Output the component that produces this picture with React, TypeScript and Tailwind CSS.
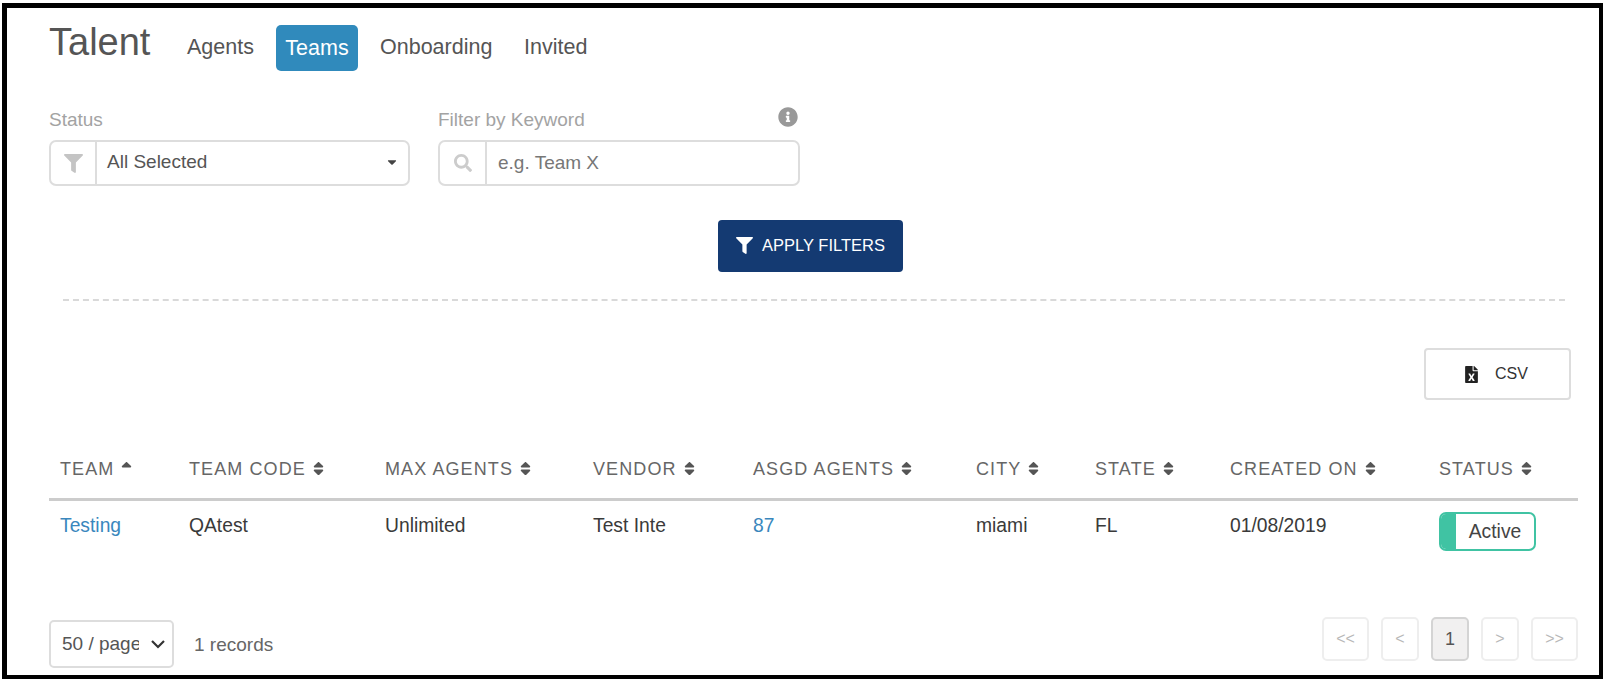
import { FaFilter, FaSearch, FaInfoCircle, FaFileExcel, FaSort, FaSortUp, FaCaretDown } from "react-icons/fa";

const font = { fontFamily: '"Liberation Sans", Arial, sans-serif' };

const columns = [
  { label: "TEAM", sorted: true },
  { label: "TEAM CODE" },
  { label: "MAX AGENTS" },
  { label: "VENDOR" },
  { label: "ASGD AGENTS" },
  { label: "CITY" },
  { label: "STATE" },
  { label: "CREATED ON" },
  { label: "STATUS" },
];

const gridCols = "grid grid-cols-[129px_196px_208px_160px_223px_119px_135px_209px_139px]";

function PageButton({ label, width, active }: { label: string; width: string; active?: boolean }) {
  return (
    <div
      className={`${width} h-[44px] flex items-center justify-center rounded-[5px] border-2 ${
        active ? "bg-[#f1f0f0] border-[#d4d4d4] text-[#555555] text-[18px]" : "bg-white border-[#eeeeee] text-[#b8b8b8] text-[16px]"
      }`}
    >
      {label}
    </div>
  );
}

export default function App() {
  return (
    <div className="w-[1603px] h-[679px] bg-white pt-[3px] pl-[2px] overflow-hidden" style={font}>
      <div className="w-[1592px] h-[667px] box-content border-[5px] border-black bg-white">
        <div className="pl-[42px] pr-[21px] h-full flex flex-col">
          <div className="flex items-start h-[63px]">
            <h1 className="text-[38px] leading-[46px] text-[#555555] w-[138px] mt-[11px]">Talent</h1>
            <div className="w-[89px] text-[21.5px] leading-[46px] text-[#555555] pt-[16px]">Agents</div>
            <div className="w-[82px] h-[46px] mt-[17px] bg-[#308abc] rounded-[5px] text-white text-[21.5px] leading-[46px] text-center">Teams</div>
            <div className="ml-[22px] w-[144px] text-[21.5px] leading-[46px] text-[#555555] pt-[16px]">Onboarding</div>
            <div className="text-[21.5px] leading-[46px] text-[#555555] pt-[16px]">Invited</div>
          </div>

          <div className="flex mt-[37px] gap-[28px]">
            <div className="w-[361px]">
              <div className="text-[19px] leading-[24px] text-[#a3a3a3] h-[32px]">Status</div>
              <div className="h-[46px] flex rounded-[7px] border-2 border-[#dddddd]">
                <div className="w-[46px] flex items-center justify-center border-r-2 border-[#dddddd] text-[#c4c4c4]">
                  <FaFilter size={19} />
                </div>
                <div className="flex-1 flex items-center justify-between pl-[10px] pr-[9px] pb-[2px] text-[19px] text-[#555555]">
                  <span>All Selected</span>
                  <FaCaretDown size={14} className="text-[#444444]" />
                </div>
              </div>
            </div>
            <div className="w-[362px]">
              <div className="h-[32px] flex justify-between pr-[2px] text-[19px] leading-[24px] text-[#a3a3a3]">
                <span>Filter by Keyword</span>
                <FaInfoCircle size={20} className="text-[#999999] -mt-[1px]" />
              </div>
              <div className="h-[46px] flex rounded-[7px] border-2 border-[#dddddd]">
                <div className="w-[47px] flex items-center justify-center border-r-2 border-[#dddddd] text-[#cccccc]">
                  <FaSearch size={18} />
                </div>
                <div className="flex-1 flex items-center pl-[11px] text-[19px] text-[#777777]">e.g. Team X</div>
              </div>
            </div>
          </div>

          <div className="flex justify-center mt-[34px] pr-[6px]">
            <div className="w-[185px] h-[52px] rounded-[4px] bg-[#143a72] text-white flex items-center justify-center gap-[9px] pb-[2px] text-[16.5px]">
              <FaFilter size={17} />
              <span>APPLY FILTERS</span>
            </div>
          </div>

          <div className="mt-[27px] ml-[14px] mr-[13px] border-t-2 border-dashed border-[#d9d9d9]" />

          <div className="flex justify-end mt-[47px] pr-[7px]">
            <div className="w-[147px] h-[52px] border-2 border-[#dddddd] rounded-[4px] flex items-center justify-center gap-[15px] pr-[4px] text-[16px] text-[#333333]">
              <FaFileExcel size={17} className="text-[#222222]" />
              <span>CSV</span>
            </div>
          </div>

          <div className={`${gridCols} mt-[54px] h-[47px] border-b-[3px] border-[#cccccc] text-[18px] tracking-[1.1px] text-[#666666]`}>
            {columns.map((c) => (
              <div key={c.label} className="pl-[11px] flex items-start gap-[4px] leading-[24px] pt-[3px]">
                <span>{c.label}</span>
                {c.sorted ? (
                  <FaSortUp size={17} className="text-[#555555] mt-[3px]" />
                ) : (
                  <FaSort size={17} className="text-[#555555] mt-[3px]" />
                )}
              </div>
            ))}
          </div>

          <div className={`${gridCols} text-[19.3px] text-[#3a3a3a] h-[58px] leading-[24px] pt-[13px]`}>
            <div className="pl-[11px] text-[#3a87bd]">Testing</div>
            <div className="pl-[11px]">QAtest</div>
            <div className="pl-[11px]">Unlimited</div>
            <div className="pl-[11px]">Test Inte</div>
            <div className="pl-[11px] text-[#3a87bd]">87</div>
            <div className="pl-[11px]">miami</div>
            <div className="pl-[11px]">FL</div>
            <div className="pl-[11px]">01/08/2019</div>
            <div className="pl-[11px]">
              <div className="w-[97px] h-[39px] -mt-[2px] flex rounded-[7px] border-2 border-[#40c3a3] overflow-hidden">
                <div className="w-[15px] bg-[#40c3a3]" />
                <div className="flex-1 flex items-center justify-center text-[#444444] text-[19.3px]">Active</div>
              </div>
            </div>
          </div>

          <div className="flex items-start justify-between mt-[61px]">
            <div className="flex items-center gap-[20px]">
              <div className="w-[125px] h-[48px] rounded-[5px] border-2 border-[#dddddd] flex items-center pl-[11px] text-[19px] text-[#555555]">
                <span className="w-[77px] overflow-hidden whitespace-nowrap">50 / page</span>
                <svg width="16" height="10" viewBox="0 0 16 10" className="ml-[11px]" fill="none" stroke="#333333" strokeWidth="2.2">
                  <path d="M2 2l6 6 6-6" />
                </svg>
              </div>
              <span className="text-[19px] text-[#666666] pt-[2px]">1 records</span>
            </div>
            <div className="flex gap-[12px] -mt-[3px]">
              <PageButton label="<<" width="w-[47px]" />
              <PageButton label="<" width="w-[38px]" />
              <PageButton label="1" width="w-[38px]" active />
              <PageButton label=">" width="w-[38px]" />
              <PageButton label=">>" width="w-[47px]" />
            </div>
          </div>
        </div>
      </div>
    </div>
  );
}
